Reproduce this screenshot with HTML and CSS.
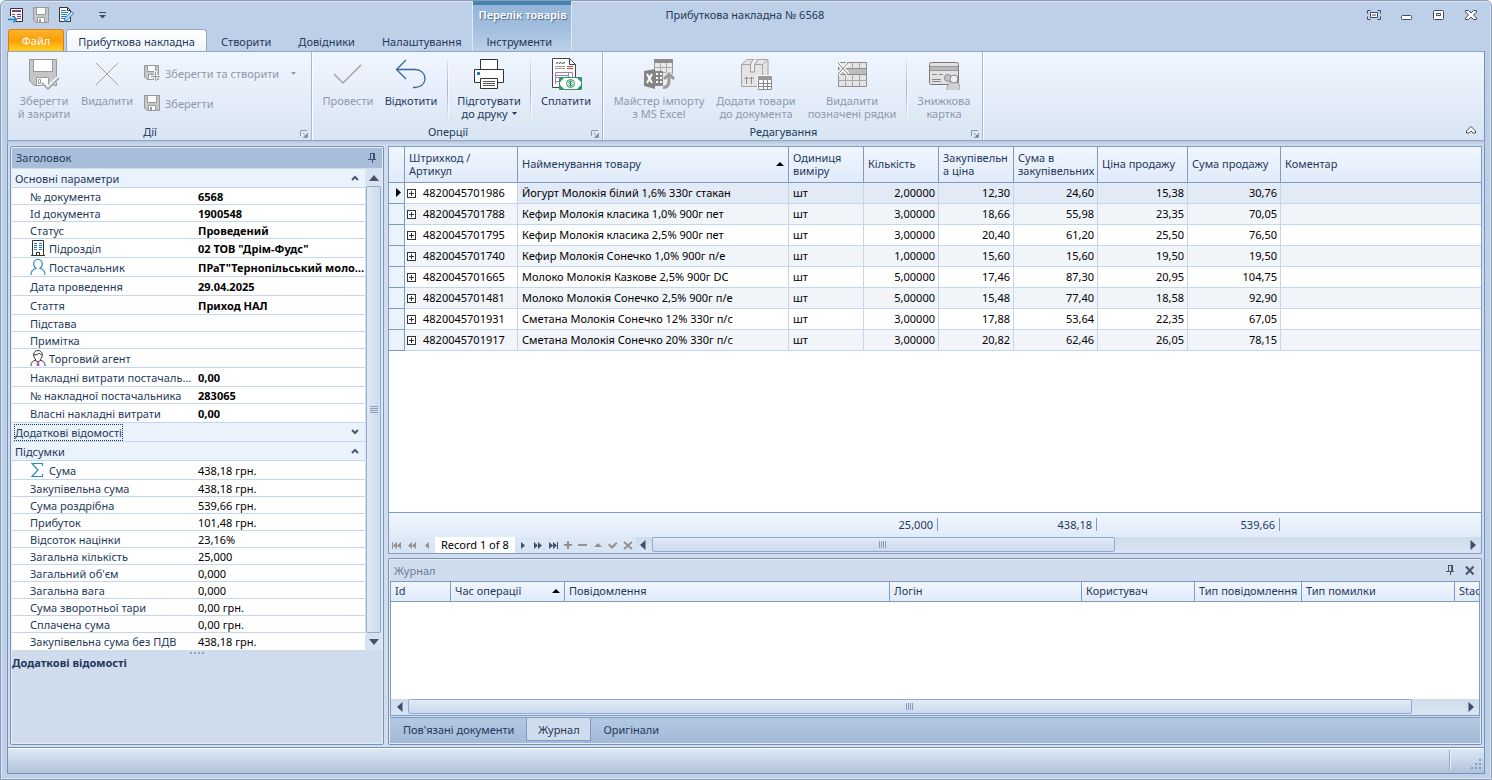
FILE: index.html
```html
<!DOCTYPE html>
<html lang="uk">
<head>
  <meta charset="UTF-8">
  <meta name="viewport" content="width=device-width, initial-scale=1.0">
  <title>Прибуткова накладна № 6568</title>
  <link rel="stylesheet" href="styles.css">
</head>
<body>
  <!-- shared icons -->
  <svg class="defs" aria-hidden="true">
    <symbol id="i-plus" viewBox="0 0 9 9"><path d="M.5.5h8v8h-8zM2 4.5h5M4.5 2v5" fill="#fff" stroke="#333" shape-rendering="crispEdges"/></symbol>
    <symbol id="i-left" viewBox="0 0 8 10"><path d="M6.500 0v10L1 5z" fill="currentColor"/></symbol>
    <symbol id="i-right" viewBox="0 0 8 10"><path d="M1.500 0v10L7 5z" fill="currentColor"/></symbol>
    <symbol id="i-up" viewBox="0 0 10 6"><path d="M0 6h10L5 0z" fill="currentColor"/></symbol>
    <symbol id="i-down" viewBox="0 0 10 6"><path d="M0 0h10L5 6z" fill="currentColor"/></symbol>
    <symbol id="i-chev-up" viewBox="0 0 8 6"><path d="M1 5l3-3 3 3" fill="none" stroke="#4a5878" stroke-width="2"/></symbol>
    <symbol id="i-chev-down" viewBox="0 0 8 6"><path d="M1 1l3 3 3-3" fill="none" stroke="#4a5878" stroke-width="2"/></symbol>
    <symbol id="i-pin" viewBox="0 0 8 10"><path d="M2.500 6V.500h4V6M5.500 0v6M0 6.500h8M4.500 7v3" fill="none" stroke="#44526f" shape-rendering="crispEdges"/></symbol>
    <symbol id="i-launch" viewBox="0 0 8 8"><path d="M.5 6V.5H7M3 3l3 3M7.500 3v4.500H3" fill="none" stroke="#8c9ab0"/><path d="M7 4v3H4z" fill="#76869f"/></symbol>
    <symbol id="i-save" viewBox="0 0 16 16"><path d="M.5.500h15v15H3L.5 13z" fill="#c4c6c8" stroke="#97999b"/><path d="M3.500.500h9v7h-9zM4.500 10.500h7v5h-7z" fill="#fff" stroke="#97999b"/><path d="M6 12h2v3H6z" fill="#97999b"/></symbol>
  </svg>

  <div class="window">
    <header class="top">
      <div class="quick">
        <button aria-label="Закрити документ">
          <svg width="16" height="16" viewBox="0 0 16 16"><path d="M2.500 9V1.500h12v13H8" fill="#fff" stroke="#333"/><path d="M4 3h9v2H4z" fill="#8d3a94"/><path d="M4 7.500h3M9 7.500h4M4 9.500h3M9 9.500h4M9 11.500h4" stroke="#8d3a94"/><path d="M0 12.500h8M5.500 9.500l3 3-3 3" fill="none" stroke="#1b7fc4" stroke-width="1.500"/></svg>
        </button>
        <button aria-label="Зберегти"><svg width="16" height="16"><use href="#i-save"/></svg></button>
        <button aria-label="Редагувати">
          <svg width="16" height="16" viewBox="0 0 16 16"><path d="M1.500.500h8l3 3v11h-11z" fill="#fff" stroke="#333"/><path d="M9.500.500v3h3" fill="none" stroke="#333"/><path d="M3 3.500h5M3 5.500h7M3 7.500h6M3 9.500h5M3 11.500h4" stroke="#1b7fc4"/><path d="M13.500 4.500l2 2-6.500 7-3 1 1-3z" fill="#bfe0f7" stroke="#1b7fc4"/></svg>
        </button>
        <button class="customize" aria-label="Налаштувати панель">
          <svg width="7" height="7" viewBox="0 0 7 7"><path d="M0 .5h7" stroke="#3c4a63"/><path d="M0 3h7L3.500 6.500z" fill="#3c4a63"/></svg>
        </button>
      </div>
      <nav class="tabs">
        <button class="tab file">Файл</button>
        <button class="tab active">Прибуткова накладна</button>
        <button class="tab">Створити</button>
        <button class="tab">Довідники</button>
        <button class="tab">Налаштування</button>
      </nav>
      <div class="context">
        <span class="context-title">Перелік товарів</span>
        <button class="tab">Інструменти</button>
      </div>
      <h1>Прибуткова накладна № 6568</h1>
      <div class="controls">
        <button aria-label="На весь екран"><svg width="14" height="10" viewBox="0 0 14 10"><path d="M3.500.500h-3v3M10.500.500h3v3M3.500 9.500h-3v-3M10.500 9.500h3v-3" fill="none" stroke="#3f4a63"/><path d="M3.500 2.500h7v5h-7z" fill="#fff" stroke="#3f4a63"/><path d="M5 5h4" stroke="#3f4a63"/></svg></button>
        <button aria-label="Згорнути"><svg width="12" height="10" viewBox="0 0 12 10"><rect x=".5" y="5.500" width="10" height="4" rx="1" fill="#fff" stroke="#3f4a63"/></svg></button>
        <button aria-label="Розгорнути"><svg width="12" height="10" viewBox="0 0 12 10"><rect x=".5" y=".5" width="10" height="9" rx="1" fill="#fff" stroke="#3f4a63"/><path d="M3.500 3.500h4v2h-4z" fill="none" stroke="#3f4a63"/></svg></button>
        <button aria-label="Закрити"><svg width="12" height="10" viewBox="0 0 12 10"><path d="M.5.5h3L6 3 8.500.500h3v1.500L8.500 5l3 3v1.500h-3L6 7 3.500 9.500h-3V8l3-3-3-3z" fill="#fff" stroke="#3f4a63"/></svg></button>
      </div>
    </header>

    <section class="ribbon">
      <div class="group">
        <div class="tools">
          <button class="tool w64" disabled>
            <svg width="32" height="32" viewBox="0 0 32 32"><path d="M1.500 1.500h27v26H6L1.500 23z" fill="#c4c6c8" stroke="#97999b"/><path d="M5.500 1.500h19v12h-19z" fill="#fff" stroke="#97999b"/><path d="M8.500 19.500h12v8h-12z" fill="#fff" stroke="#97999b"/><path d="M10.500 21.500h2v4h-2z" fill="none" stroke="#97999b"/><path d="M14 24l6 6L31 19" fill="none" stroke="#edf3fb" stroke-width="4"/><path d="M14 25l6 6L31 20" fill="none" stroke="#97999b" stroke-width="1.500"/></svg>
            Зберегти<br>й закрити
          </button>
          <button class="tool w62" disabled>
            <svg width="32" height="32" viewBox="0 0 32 32"><path d="M5 5l22 22M27 5L5 27" stroke="#a2a4a7"/></svg>
            Видалити
          </button>
          <div class="small-tools">
            <button disabled>
              <svg width="16" height="16" viewBox="0 0 16 16"><path d="M.5.500h14v14H3L.5 12z" fill="#c4c6c8" stroke="#97999b"/><path d="M3.500.500h8v6h-8zM4.500 9.500h5v5h-5z" fill="#fff" stroke="#97999b"/><path d="M11.500 6v10M6.500 11.500H16" stroke="#eaf1fa" stroke-width="3"/><path d="M11.500 7v9M7 11.500h9" stroke="#97999b"/></svg>
              Зберегти та створити
              <svg class="caret" width="5" height="3" viewBox="0 0 10 6"><use href="#i-down"/></svg>
            </button>
            <button disabled><svg width="16" height="16"><use href="#i-save"/></svg>Зберегти</button>
          </div>
        </div>
        <div class="caption">Дії<button aria-label="Параметри групи"><svg width="8" height="8"><use href="#i-launch"/></svg></button></div>
      </div>

      <div class="group">
        <div class="tools">
          <button class="tool w62" disabled>
            <svg width="32" height="32" viewBox="0 0 32 32"><path d="M2 16l9 9L29 7" fill="none" stroke="#a2a4a7" stroke-width="1.500"/></svg>
            Провести
          </button>
          <button class="tool w64">
            <svg width="32" height="32" viewBox="0 0 32 32"><path d="M11 2L1.500 11.500 11 21M2 11.500h18c6 0 10 4 10 9s-4 9-10 9h-2" fill="none" stroke="#3a6598" stroke-width="1.300"/></svg>
            Відкотити
          </button>
          <i class="sep"></i>
          <button class="tool w74">
            <svg width="32" height="32" viewBox="0 0 32 32"><g fill="#fff" stroke="#333"><path d="M7.500 1.500h17v10h-17zM1.500 11.500h29v13h-29z"/><path d="M7.500 20.500h17v10h-17z"/><path d="M10 23.500h12M10 25.500h12M10 27.500h12" stroke="#555"/></g><path d="M4 14h3v3H4z" fill="#1b7fc4"/></svg>
            Підготувати<br>до друку <svg class="caret" width="5" height="3" viewBox="0 0 10 6"><use href="#i-down"/></svg>
          </button>
          <i class="sep"></i>
          <button class="tool w62">
            <svg width="32" height="32" viewBox="0 0 32 32"><path d="M2.500.500h17l6 6v23h-23z" fill="#fff" stroke="#444"/><path d="M19.500.500v6h6" fill="none" stroke="#444"/><path d="M6 5.500l2-1 1 1 2-1 1 1 3-1" fill="none" stroke="#444"/><path d="M5 8.500h10M5 10.500h10" stroke="#999"/><path d="M17 8.500h6M17 10.500h6" stroke="#d8432c"/><path d="M5.500 14.500h17v5h-17zM5.500 20v6M5 23.500h5M5 17.500h13M18.500 14v5" fill="none" stroke="#a578b4"/><path d="M9.500 19.500h22v12h-22z" fill="#fff" stroke="#2f9768"/><path d="M10 20h4l-4 4zM27 20h4v4zM10 27v4h4zM31 27v4h-4z" fill="#2f9768"/><circle cx="20.500" cy="25.500" r="4" fill="#e8f5ef" stroke="#2f9768"/><path d="M22.500 24c-1-1-4-1-4 .5s4 .5 4 2-3 1.500-4 .5M20.500 22.500v6" fill="none" stroke="#2f9768"/></svg>
            Сплатити
          </button>
        </div>
        <div class="caption">Оперції<button aria-label="Параметри групи"><svg width="8" height="8"><use href="#i-launch"/></svg></button></div>
      </div>

      <div class="group">
        <div class="tools">
          <button class="tool w102" disabled>
            <svg width="32" height="32" viewBox="0 0 32 32"><path d="M11.500 1.500h18v18h-18z" fill="#e8e8e8" stroke="#999"/><path d="M11 1h19v4H11z" fill="#8c8c8c"/><path d="M11 9.500h18M11 14.500h18M17.500 5v14M23.500 5v14" stroke="#aaa"/><path d="M1 13l11-2v20L1 28z" fill="#858585"/><path d="M4 16l5 9M9 16l-5 9" stroke="#fff" stroke-width="2"/><path d="M12 13h8v15h-8z" fill="#858585"/><path d="M13 16h2M17 16h2M13 20h2M17 20h2M13 24h2M17 24h2" stroke="#fff" stroke-width="2"/><path d="M20 29.500c5 0 6-3 6-7V17M21 21l5-5 5 5" fill="none" stroke="#ededed" stroke-width="5"/><path d="M20 29.500c5 0 6-3 6-7V17M21 21l5-5 5 5" fill="none" stroke="#9a9a9a" stroke-width="3"/></svg>
            Майстер імпорту<br>з MS Excel
          </button>
          <button class="tool w92" disabled>
            <svg width="32" height="32" viewBox="0 0 32 32"><path d="M1.500 6.500L7 1.500h21v21l-5 6H1.500z" fill="#e4e4e4" stroke="#a4a4a4"/><path d="M1.500 6.500h21l5.500-5M22.500 6.500v22" fill="none" stroke="#a4a4a4"/><path d="M13 1.500L10.500 6v8h4V7L18 1.500" fill="#efefef" stroke="#999"/><path d="M6.500 26v-7M4.500 21l2-2 2 2M11.500 26v-7M9.500 21l2-2 2 2" fill="none" stroke="#888"/><path d="M17 17h15v15H17z" fill="#f2f5fa"/><path d="M18.500 18.500h13v13h-13z" fill="#fff" stroke="#888"/><path d="M18 18h14v4H18z" fill="#999"/><path d="M18 25.500h14M18 28.500h14M23.500 22v9M27.500 22v9" stroke="#888"/></svg>
            Додати товари<br>до документа
          </button>
          <button class="tool w100" disabled>
            <svg width="32" height="32" viewBox="0 0 32 32"><path d="M2.500 4.500h28v24h-28z" fill="#e4e4e4" stroke="#8c8c8c"/><path d="M9.500 5v5M16.500 5v5M23.500 5v5M9.500 17v11M16.500 17v11M23.500 17v11M2 22.500h29" stroke="#a6a6a6"/><path d="M2.500 10.500h28v6h-28z" fill="#bcbcbc" stroke="#8c8c8c"/><path d="M2 5l10 11M12 5L2 16" stroke="#f5f8fc" stroke-width="4"/><path d="M2 5l10 11M12 5L2 16" stroke="#808080"/></svg>
            Видалити<br>позначені рядки
          </button>
          <i class="sep"></i>
          <button class="tool w66" disabled>
            <svg width="32" height="32" viewBox="0 0 32 32"><rect x="1.500" y="4.500" width="29" height="22" rx="2" fill="#e2e2e2" stroke="#777"/><path d="M2 8.500h28v4H2z" fill="#bababa" stroke="#999"/><path d="M4 16.500h5M11 16.500h4M4 21.500h9M4 23.500h9" stroke="#888"/><circle cx="20" cy="20" r="3.500" fill="#c4c4c4" stroke="#888"/><path d="M19 32c0-6 2-8 7-8s6 2 6 8" fill="#d0d0d0" stroke="#999"/><circle cx="26" cy="21" r="4" fill="#eee" stroke="#888"/></svg>
            Знижкова<br>картка
          </button>
        </div>
        <div class="caption">Редагування<button aria-label="Параметри групи"><svg width="8" height="8"><use href="#i-launch"/></svg></button></div>
      </div>

      <button class="collapse" aria-label="Згорнути стрічку">
        <svg width="10" height="8" viewBox="0 0 10 8"><path d="M5 .5L9.500 5v2H7L5 5 3 7H.5V5z" fill="#fff" stroke="#3f4a63"/></svg>
      </button>
    </section>

    <main class="workspace">
      <aside class="panel side">
        <div class="side-head">
          <h2>Заголовок</h2>
          <button aria-label="Закріпити"><svg width="8" height="10"><use href="#i-pin"/></svg></button>
        </div>
        <div class="props-wrap">
          <table class="props">
            <colgroup><col class="c-name"><col></colgroup>
            <tbody class="bold">
              <tr class="cat"><th colspan="2">Основні параметри<button aria-label="Згорнути"><svg width="8" height="6"><use href="#i-chev-up"/></svg></button></th></tr>
              <tr><th>№ документа</th><td>6568</td></tr>
              <tr><th>Id документа</th><td>1900548</td></tr>
              <tr><th>Статус</th><td>Проведений</td></tr>
              <tr class="tall"><th><div class="with-icon"><svg width="16" height="16" viewBox="0 0 16 16"><path d="M2.500 15V.500h11V15" fill="#fff" stroke="#333"/><path d="M1 15.500h14M6.500 15v-2.500h3V15" fill="none" stroke="#333"/><path d="M4 3.500h3M9 3.500h3M4 5.500h3M9 5.500h3M4 7.500h3M9 7.500h3M4 9.500h3M9 9.500h3" stroke="#1b7fc4"/></svg>Підрозділ</div></th><td>02 ТОВ "Дрім-Фудс"</td></tr>
              <tr class="tall"><th><div class="with-icon"><svg width="16" height="16" viewBox="0 0 16 16"><path d="M1 16c0-4 2-6 5-6.500C2 6 3.500.500 8 .500S14 6 10 9.500c3 .5 5 2.500 5 6.500" fill="none" stroke="#2a8bc8" stroke-width="1.200"/></svg>Постачальник</div></th><td>ПРаТ"Тернопільський молокозавод"</td></tr>
              <tr class="tall"><th>Дата проведення</th><td>29.04.2025</td></tr>
              <tr class="tall"><th>Стаття</th><td>Приход НАЛ</td></tr>
              <tr><th>Підстава</th><td></td></tr>
              <tr><th>Примітка</th><td></td></tr>
              <tr class="tall"><th><div class="with-icon"><svg width="16" height="16" viewBox="0 0 16 16"><path d="M1 16c0-4 2-5 5-6C2 6 3.500.500 8 .500S14 6 10 10c3 1 5 2 5 6M4 5c3 0 4-1 5-2 1 1 2 1.500 3 1.500M5 10l3 2 3-2" fill="none" stroke="#333"/><path d="M7 12h2l.5 4h-3z" fill="#b25fb5"/></svg>Торговий агент</div></th><td></td></tr>
              <tr class="tall"><th>Накладні витрати постачальника</th><td>0,00</td></tr>
              <tr><th>№ накладної постачальника</th><td>283065</td></tr>
              <tr class="tall"><th>Власні накладні витрати</th><td>0,00</td></tr>
            </tbody>
            <tbody>
              <tr class="cat"><th colspan="2"><span class="focused">Додаткові відомості</span><button aria-label="Розгорнути"><svg width="8" height="6"><use href="#i-chev-down"/></svg></button></th></tr>
            </tbody>
            <tbody>
              <tr class="cat"><th colspan="2">Підсумки<button aria-label="Згорнути"><svg width="8" height="6"><use href="#i-chev-up"/></svg></button></th></tr>
              <tr class="tall"><th><div class="with-icon"><svg width="16" height="16" viewBox="0 0 16 16"><path d="M12.500 4V1.500H2L8 8l-6 6.500h10.500V12" fill="none" stroke="#2a8bc8" stroke-width="1.200"/></svg>Сума</div></th><td>438,18 грн.</td></tr>
              <tr><th>Закупівельна сума</th><td>438,18 грн.</td></tr>
              <tr><th>Сума роздрібна</th><td>539,66 грн.</td></tr>
              <tr><th>Прибуток</th><td>101,48 грн.</td></tr>
              <tr><th>Відсоток націнки</th><td>23,16%</td></tr>
              <tr><th>Загальна кількість</th><td>25,000</td></tr>
              <tr><th>Загальний об'єм</th><td>0,000</td></tr>
              <tr><th>Загальна вага</th><td>0,000</td></tr>
              <tr><th>Сума зворотньої тари</th><td>0,00 грн.</td></tr>
              <tr><th>Сплачена сума</th><td>0,00 грн.</td></tr>
              <tr><th>Закупівельна сума без ПДВ</th><td>438,18 грн.</td></tr>
            </tbody>
          </table>
          <div class="scroll-v">
            <button aria-label="Вгору"><svg width="10" height="6"><use href="#i-up"/></svg></button>
            <div class="thumb"><i class="grip"></i></div>
            <button aria-label="Вниз"><svg width="10" height="6"><use href="#i-down"/></svg></button>
          </div>
        </div>
        <div class="splitter"></div>
        <p class="description">Додаткові відомості</p>
      </aside>

      <div class="content">
        <section class="grid">
          <table class="data goods">
            <colgroup><col class="g-mark"><col class="g-code"><col class="g-name"><col class="g-75"><col class="g-75"><col class="g-75"><col class="g-sum"><col class="g-price"><col class="g-total"><col></colgroup>
            <thead>
              <tr>
                <th></th><th>Штрихкод /<br>Артикул</th>
                <th><div class="sorted">Найменування товару<svg width="8" height="4" viewBox="0 0 8 4"><path d="M0 4h8L4 0z"/></svg></div></th>
                <th>Одиниця<br>виміру</th><th>Кількість</th><th>Закупівельн<br>а ціна</th><th>Сума в<br>закупівельних</th><th>Ціна продажу</th><th>Сума продажу</th><th>Коментар</th>
              </tr>
            </thead>
            <tbody>
              <tr class="current"><td><svg width="5" height="9" viewBox="0 0 5 9"><path d="M0 0v9l5-4.500z"/></svg></td><td><button aria-label="Розгорнути"><svg width="9" height="9"><use href="#i-plus"/></svg></button>4820045701986</td><td>Йогурт Молокія білий 1,6% 330г стакан</td><td>шт</td><td>2,00000</td><td>12,30</td><td>24,60</td><td>15,38</td><td>30,76</td><td></td></tr>
              <tr><td></td><td><button aria-label="Розгорнути"><svg width="9" height="9"><use href="#i-plus"/></svg></button>4820045701788</td><td>Кефир Молокія класика 1,0% 900г пет</td><td>шт</td><td>3,00000</td><td>18,66</td><td>55,98</td><td>23,35</td><td>70,05</td><td></td></tr>
              <tr><td></td><td><button aria-label="Розгорнути"><svg width="9" height="9"><use href="#i-plus"/></svg></button>4820045701795</td><td>Кефир Молокія класика 2,5% 900г пет</td><td>шт</td><td>3,00000</td><td>20,40</td><td>61,20</td><td>25,50</td><td>76,50</td><td></td></tr>
              <tr><td></td><td><button aria-label="Розгорнути"><svg width="9" height="9"><use href="#i-plus"/></svg></button>4820045701740</td><td>Кефир Молокія Сонечко 1,0% 900г п/е</td><td>шт</td><td>1,00000</td><td>15,60</td><td>15,60</td><td>19,50</td><td>19,50</td><td></td></tr>
              <tr><td></td><td><button aria-label="Розгорнути"><svg width="9" height="9"><use href="#i-plus"/></svg></button>4820045701665</td><td>Молоко Молокія Казкове 2,5% 900г DC</td><td>шт</td><td>5,00000</td><td>17,46</td><td>87,30</td><td>20,95</td><td>104,75</td><td></td></tr>
              <tr><td></td><td><button aria-label="Розгорнути"><svg width="9" height="9"><use href="#i-plus"/></svg></button>4820045701481</td><td>Молоко Молокія Сонечко 2,5% 900г п/е</td><td>шт</td><td>5,00000</td><td>15,48</td><td>77,40</td><td>18,58</td><td>92,90</td><td></td></tr>
              <tr><td></td><td><button aria-label="Розгорнути"><svg width="9" height="9"><use href="#i-plus"/></svg></button>4820045701931</td><td>Сметана Молокія Сонечко 12% 330г п/с</td><td>шт</td><td>3,00000</td><td>17,88</td><td>53,64</td><td>22,35</td><td>67,05</td><td></td></tr>
              <tr><td></td><td><button aria-label="Розгорнути"><svg width="9" height="9"><use href="#i-plus"/></svg></button>4820045701917</td><td>Сметана Молокія Сонечко 20% 330г п/с</td><td>шт</td><td>3,00000</td><td>20,82</td><td>62,46</td><td>26,05</td><td>78,15</td><td></td></tr>
            </tbody>
          </table>
          <div class="totals">
            <span class="t-qty">25,000</span>
            <span class="t-sum">438,18</span>
            <span class="t-sale">539,66</span>
          </div>
          <div class="navigator">
            <div class="records off">
              <button aria-label="Перший"><svg width="10" height="9" viewBox="0 0 10 9"><path d="M0 1h1v7H0zM5 1v7L1 4.500zM9 1v7L5 4.500z"/></svg></button>
              <button aria-label="Попередня сторінка"><svg width="10" height="9" viewBox="0 0 10 9"><path d="M5 1v7L1 4.500zM9 1v7L5 4.500z"/></svg></button>
              <button aria-label="Попередній"><svg width="10" height="9" viewBox="0 0 10 9"><path d="M7 1v7L3 4.500z"/></svg></button>
            </div>
            <span class="record">Record 1 of 8</span>
            <div class="records">
              <button aria-label="Наступний"><svg width="10" height="9" viewBox="0 0 10 9"><path d="M3 1v7l4-3.500z"/></svg></button>
              <button aria-label="Наступна сторінка"><svg width="10" height="9" viewBox="0 0 10 9"><path d="M1 1v7l4-3.500zM5 1v7l4-3.500z"/></svg></button>
              <button aria-label="Останній"><svg width="10" height="9" viewBox="0 0 10 9"><path d="M1 1v7l4-3.500zM5 1v7l4-3.500zM9 1h1v7H9z"/></svg></button>
            </div>
            <div class="records off">
              <button aria-label="Додати"><svg width="10" height="9" viewBox="0 0 10 9"><path d="M4 0h2v3h3v2H6v3H4V5H1V3h3z"/></svg></button>
              <button aria-label="Видалити"><svg width="10" height="9" viewBox="0 0 10 9"><path d="M0 3h9v2H0z"/></svg></button>
              <button aria-label="Редагувати"><svg width="10" height="9" viewBox="0 0 10 9"><path d="M1 6h8L5 2z"/></svg></button>
              <button aria-label="Прийняти"><svg width="10" height="9" viewBox="0 0 10 9"><path d="M0 4l1.500-1.500L4 5l4-4 1.500 1.500L4 8z"/></svg></button>
              <button aria-label="Скасувати"><svg width="10" height="9" viewBox="0 0 10 9"><path d="M1 1l8 7M9 1L1 8" stroke="#929292" stroke-width="2"/></svg></button>
            </div>
            <div class="scroll-h">
              <button aria-label="Ліворуч"><svg width="8" height="10"><use href="#i-left"/></svg></button>
              <div class="track"><div class="thumb goods-thumb"><i class="grip"></i></div></div>
              <button aria-label="Праворуч"><svg width="8" height="10"><use href="#i-right"/></svg></button>
            </div>
          </div>
        </section>

        <section class="panel journal">
          <div class="journal-head">
            <h2>Журнал</h2>
            <button aria-label="Закріпити"><svg width="8" height="10"><use href="#i-pin"/></svg></button>
            <button aria-label="Закрити"><svg width="10" height="9" viewBox="0 0 10 9"><path d="M1 .5l7.500 8M8.500 .5L1 8.500" stroke="#44526f" stroke-width="2"/></svg></button>
          </div>
          <div class="journal-body">
            <table class="data log">
              <colgroup><col class="l-id"><col class="l-time"><col class="l-msg"><col class="l-login"><col class="l-user"><col class="l-type"><col class="l-err"><col></colgroup>
              <thead>
                <tr><th>Id</th><th><div class="sorted">Час операції<svg width="8" height="4" viewBox="0 0 8 4"><path d="M0 4h8L4 0z"/></svg></div></th><th>Повідомлення</th><th>Логін</th><th>Користувач</th><th>Тип повідомлення</th><th>Тип помилки</th><th>Stack</th></tr>
              </thead>
            </table>
            <div class="scroll-h">
              <button aria-label="Ліворуч"><svg width="8" height="10"><use href="#i-left"/></svg></button>
              <div class="track"><div class="thumb log-thumb"><i class="grip"></i></div></div>
              <button aria-label="Праворуч"><svg width="8" height="10"><use href="#i-right"/></svg></button>
            </div>
          </div>
          <div class="doc-tabs">
            <button>Пов'язані документи</button>
            <button class="active">Журнал</button>
            <button>Оригінали</button>
          </div>
        </section>
      </div>
    </main>

    <footer class="status">
      <i class="status-sep"></i>
      <svg width="11" height="11" viewBox="0 0 11 11"><path d="M8 0h2v2H8zM4 4h2v2H4zM8 4h2v2H8zM0 8h2v2H0zM4 8h2v2H4zM8 8h2v2H8z" fill="#7f9cc4"/></svg>
    </footer>
  </div>
</body>
</html>
```
FILE: styles.css
```css
* {
  box-sizing: border-box;
}

body {
  margin: 0;
  background: #fff;
  color: #1e395b;
  font: 11px/13px "Noto Sans", "Open Sans", sans-serif;
}

button {
  margin: 0;
  padding: 0;
  border: none;
  background: none;
  color: inherit;
  font: inherit;
}

h1, h2, p {
  margin: 0;
  font-size: 11px;
  font-weight: normal;
}

svg {
  display: block;
  flex: none;
}

.defs {
  position: absolute;
  width: 0;
  height: 0;
}

.window {
  display: flex;
  flex-direction: column;
  min-height: 100vh;
  padding: 0 6px 5px;
  border: 1px solid #8b9bb4;
  border-radius: 6px 6px 0 0;
  background: #bed0e8;
  box-shadow: inset 0 0 0 1px #dbe7f5;
}

/* title bar + tabs */
.top {
  display: grid;
  grid-template-columns: auto auto 1fr auto;
  grid-template-rows: 28px 22px;
}

.quick {
  display: flex;
  align-items: center;
  gap: 9px;
  padding-left: 1px;
}

.quick .customize {
  margin-left: 16px;
}

.tabs {
  grid-row: 2;
  grid-column: 1;
  display: flex;
  gap: 1px;
  padding-left: 1px;
}

.tab {
  height: 22px;
  padding: 2px 13px 0;
}

.tab:last-child {
  padding-right: 11px;
}

.tab.file {
  width: 56px;
  margin-right: 1px;
  padding: 0;
  border: 1px solid #e07b1c;
  border-bottom: none;
  border-radius: 3px 3px 0 0;
  background: linear-gradient(#fdb52a, #f99d0b 50%, #ffd21f);
  color: #fff;
}

.tab.active {
  width: 141px;
  padding: 1px 0 0;
  border: 1px solid #93a9c9;
  border-bottom: none;
  border-radius: 3px 3px 0 0;
  background: linear-gradient(#fff, #f0f6fe);
}

.context {
  grid-row: 1 / 3;
  grid-column: 2;
  display: flex;
  flex-direction: column;
  justify-content: space-between;
  width: 100px;
  border: 1px solid #dfe9f5;
  border-width: 0 1px;
  background: linear-gradient(#4683b5 4px, #93b4d9 4px, #a5c0df 60%, #bdd0e8);
  text-align: center;
}

.context-title {
  padding-top: 7px;
  color: #fff;
  font-weight: 600;
  text-shadow: 1px 1px 1px #4a6a90;
}

.context .tab {
  padding: 2px 0 0 13px;
  text-align: left;
}

.top h1 {
  grid-column: 3;
  padding: 7px 0 0 93px;
}

.controls {
  grid-column: 4;
  display: flex;
  align-items: center;
  gap: 20px;
  padding-right: 8px;
}

/* ribbon */
.ribbon {
  display: flex;
  position: relative;
  z-index: 1;
  height: 90px;
  border: 1px solid #8ea6c8;
  border-right-color: #7391bb;
  background: linear-gradient(#f0f6ff, #e6eefa 45%, #d8e5f3);
  box-shadow: 0 2px 3px #b3c3d8;
}

.group {
  display: flex;
  flex-direction: column;
  padding: 0 5px 0 4px;
  border-right: 1px solid #a4b9d5;
  box-shadow: 1px 0 #fff;
}

.group:first-child {
  width: 304px;
}

.group + .group {
  margin-left: 1px;
}

.tools {
  display: flex;
  align-items: flex-start;
  height: 72px;
}

.tool {
  padding-top: 6px;
  text-align: center;
  white-space: nowrap;
}

.tool > svg {
  margin: 0 auto 4px;
}

.tool .caret {
  display: inline-block;
  margin: 0 0 3px 1px;
}

.w62 { width: 62px; }
.w64 { width: 64px; }
.w66 { width: 66px; }
.w74 { width: 74px; }
.w92 { width: 92px; }
.w100 { width: 100px; }
.w102 { width: 102px; }

.ribbon button:disabled {
  color: #8d99ad;
}

.small-tools {
  display: flex;
  flex-direction: column;
  gap: 14px;
  padding: 13px 0 0 6px;
}

.small-tools button {
  display: flex;
  align-items: center;
  gap: 5px;
  height: 16px;
}

.small-tools .caret {
  margin-left: 7px;
}

.sep {
  width: 1px;
  height: 58px;
  margin: 8px 4px 0;
  background: linear-gradient(#dbe6f3, #9fb3cf, #dbe6f3);
  box-shadow: 1px 0 #f5f9fe;
}

.caption {
  display: flex;
  align-items: center;
  justify-content: center;
  position: relative;
  height: 16px;
  padding: 0 18px 2px 0;
}

.caption button {
  position: absolute;
  right: -2px;
  bottom: 2px;
}

.collapse {
  margin: auto 8px 6px auto;
}

/* workspace */
.workspace {
  display: flex;
  flex: 1;
  gap: 4px;
  padding: 5px 2px 2px;
  border: 1px solid #7391bb;
  border-width: 0 1px;
  background: #cfddee;
}

.panel {
  border: 1px solid #7e92b0;
  border-radius: 2px;
  background: #cfdcee;
  box-shadow: inset 0 0 0 1px #e3ecf7;
}

.side {
  display: flex;
  flex-direction: column;
  width: 374px;
  padding: 1px;
}

.side-head {
  display: flex;
  align-items: center;
  justify-content: space-between;
  height: 20px;
  margin-bottom: 1px;
  padding: 0 6px 1px 4px;
  background: #a8bdd9;
}

.props-wrap {
  display: flex;
}

.props {
  flex: 1;
  width: 0;
  border-collapse: separate;
  border-spacing: 0;
  table-layout: fixed;
  background: #fff;
}

.c-name {
  width: 182px;
}

.props th,
.props td {
  height: 17px;
  padding: 0 0 0 4px;
  overflow: hidden;
  border-bottom: 1px solid #c3d6f1;
  font-weight: normal;
  text-align: left;
  text-overflow: ellipsis;
  white-space: nowrap;
}

.props th {
  padding: 0 2px 0 18px;
}

.props td {
  color: #000;
}

.props .bold td {
  font-weight: bold;
}

.props .tall th,
.props .tall td,
.props .cat th {
  height: 19px;
}

.with-icon {
  display: flex;
  align-items: center;
  gap: 3px;
  height: 18px;
}

.props .cat th {
  padding: 0 6px 0 3px;
  background: #eaf2fc;
}

.props .cat button {
  float: right;
}

.props .cat button svg {
  margin: 3px 0 0;
}

.props tbody:last-child tr:last-child th,
.props tbody:last-child tr:last-child td {
  border-bottom-color: #fff;
}

.focused {
  outline: 1px dotted #1e395b;
}

.scroll-v {
  display: flex;
  flex-direction: column;
  width: 17px;
  background: #d7e3f1;
}

.scroll-v button {
  display: flex;
  align-items: center;
  justify-content: center;
  height: 17px;
  color: #44526f;
}

.thumb {
  display: flex;
  align-items: center;
  justify-content: center;
  border: 1px solid #8fabd3;
  border-radius: 2px;
  background: linear-gradient(#e3ebf6, #d3dff0 60%, #cbdcf2);
}

.scroll-v .thumb {
  flex: 1;
  margin: 0 1px;
  background: linear-gradient(90deg, #e3ebf6, #d3dff0 60%, #cbdcf2);
}

.grip {
  width: 8px;
  height: 7px;
  background: repeating-linear-gradient(90deg, #8b9cb8 0 1px, transparent 1px 2px);
}

.scroll-v .grip {
  height: 8px;
  background: repeating-linear-gradient(#8b9cb8 0 1px, transparent 1px 2px);
}

.splitter {
  width: 15px;
  height: 2px;
  margin: 2px auto;
  background: repeating-linear-gradient(90deg, #8ea3c2 0 2px, transparent 2px 4px);
}

.description {
  font-weight: bold;
}

.content {
  display: flex;
  flex: 1;
  flex-direction: column;
  gap: 4px;
  min-width: 0;
}

/* goods grid */
.grid {
  display: flex;
  flex: 1;
  flex-direction: column;
  border: 1px solid #7f9bc3;
  background: #fff;
}

.data {
  width: 100%;
  border-collapse: separate;
  border-spacing: 0;
  table-layout: fixed;
}

.data th,
.data td {
  padding: 0 4px 2px;
  overflow: hidden;
  white-space: nowrap;
  text-align: left;
}

.data th {
  border-right: 1px solid #7f9bc3;
  border-bottom: 1px solid #7f9bc3;
  background: linear-gradient(#f0f6fd, #e0ebf9);
  font-weight: normal;
}

.data th:last-child,
.data td:last-child {
  padding-right: 0;
  border-right: none;
}

.goods th {
  height: 36px;
}

.goods td {
  height: 21px;
  border-right: 1px solid #c3d6f1;
  border-bottom: 1px solid #c3d6f1;
  color: #000;
}

.goods tr:nth-child(even) td {
  background: #f1f5fa;
}

.goods .current td {
  background: #e2eaf5;
}

.goods .current td:nth-child(2) {
  background: #fff;
}

.goods tbody td:nth-child(2) {
  padding-left: 2px;
}

.goods tbody td:first-child {
  padding-left: 7px;
  border-color: #7f9bc3;
  background: #eaf2fc;
}

.goods td:nth-child(n+5) {
  padding-right: 3px;
  text-align: right;
}

.goods td button {
  display: inline-block;
  margin-right: 7px;
  vertical-align: -1px;
}

.g-mark { width: 16px; }
.g-code { width: 113px; }
.g-name { width: 271px; }
.g-75 { width: 75px; }
.g-sum { width: 84px; }
.g-price { width: 90px; }
.g-total { width: 93px; }

.sorted {
  display: flex;
  align-items: center;
  justify-content: space-between;
}

.totals {
  display: flex;
  align-items: center;
  height: 25px;
  margin-top: auto;
  padding-bottom: 1px;
  border-top: 1px solid #7f9bc3;
  background: linear-gradient(#f0f6fd, #e0ebf9);
}

.totals span {
  padding-right: 4px;
  border-right: 1px solid #7f9bc3;
  text-align: right;
}

.t-qty { width: 549px; }
.t-sum { width: 159px; }
.t-sale { width: 183px; }

.navigator {
  display: flex;
  height: 16px;
  background: linear-gradient(#dfe9f6, #d6e3f1);
}

.records {
  display: flex;
  align-items: center;
  gap: 5px;
  padding: 0 3px;
  fill: #44526f;
}

.records.off {
  fill: #929292;
}

.records + .records.off {
  padding: 0 2px;
}

.record {
  padding: 1px 6px 0;
  background: #fff;
  color: #000;
}

.scroll-h {
  display: flex;
  flex: 1;
  height: 16px;
  background: linear-gradient(#cfdceb, #d9e5f2);
}

.scroll-h button {
  display: flex;
  align-items: center;
  justify-content: center;
  width: 17px;
  color: #3d4c70;
}

.track {
  display: flex;
  flex: 1;
  padding: 0 0 1px;
}

.goods-thumb {
  width: 57%;
}

.log-thumb {
  width: calc(100% - 50px);
}

/* journal */
.journal {
  display: flex;
  flex-direction: column;
  height: 187px;
  padding: 1px;
}

.journal-head {
  display: flex;
  align-items: center;
  gap: 11px;
  height: 21px;
  padding: 0 5px 1px 4px;
  color: #6b7d9c;
}

.journal-head h2 {
  margin-right: auto;
}

.journal-body {
  display: flex;
  flex: 1;
  flex-direction: column;
  justify-content: space-between;
  border: 1px solid #7f9bc3;
  background: #fff;
}

.journal-body .scroll-h {
  flex: none;
}

.log th {
  height: 20px;
}

.l-id { width: 60px; }
.l-time { width: 114px; }
.l-msg { width: 325px; }
.l-login { width: 192px; }
.l-user { width: 113px; }
.l-type { width: 107px; }
.l-err { width: 153px; }

.doc-tabs {
  display: flex;
  align-items: flex-start;
  height: 26px;
  margin-top: 1px;
  padding-left: 1px;
  border-top: 1px solid #7f9bc3;
  background: linear-gradient(#b3c9e3, #a3b9d8);
}

.doc-tabs button {
  height: 23px;
  padding: 0 12px 1px;
}

.doc-tabs .active {
  width: 65px;
  padding: 0;
  border: 1px solid #7f9bc3;
  border-top: none;
  background: #cfdcee;
}

/* status bar */
.status {
  display: flex;
  align-items: flex-end;
  justify-content: flex-end;
  height: 27px;
  padding: 0 2px 3px 0;
  border: 1px solid #7391bb;
  background: linear-gradient(#dfe9f6, #c8d7e8 50%, #b0c2d9);
  box-shadow: inset 0 1px #fff;
}

.status-sep {
  width: 1px;
  height: 20px;
  margin-right: 21px;
  background: #8ea6c8;
  box-shadow: 1px 0 #e8f0f9;
}
```
